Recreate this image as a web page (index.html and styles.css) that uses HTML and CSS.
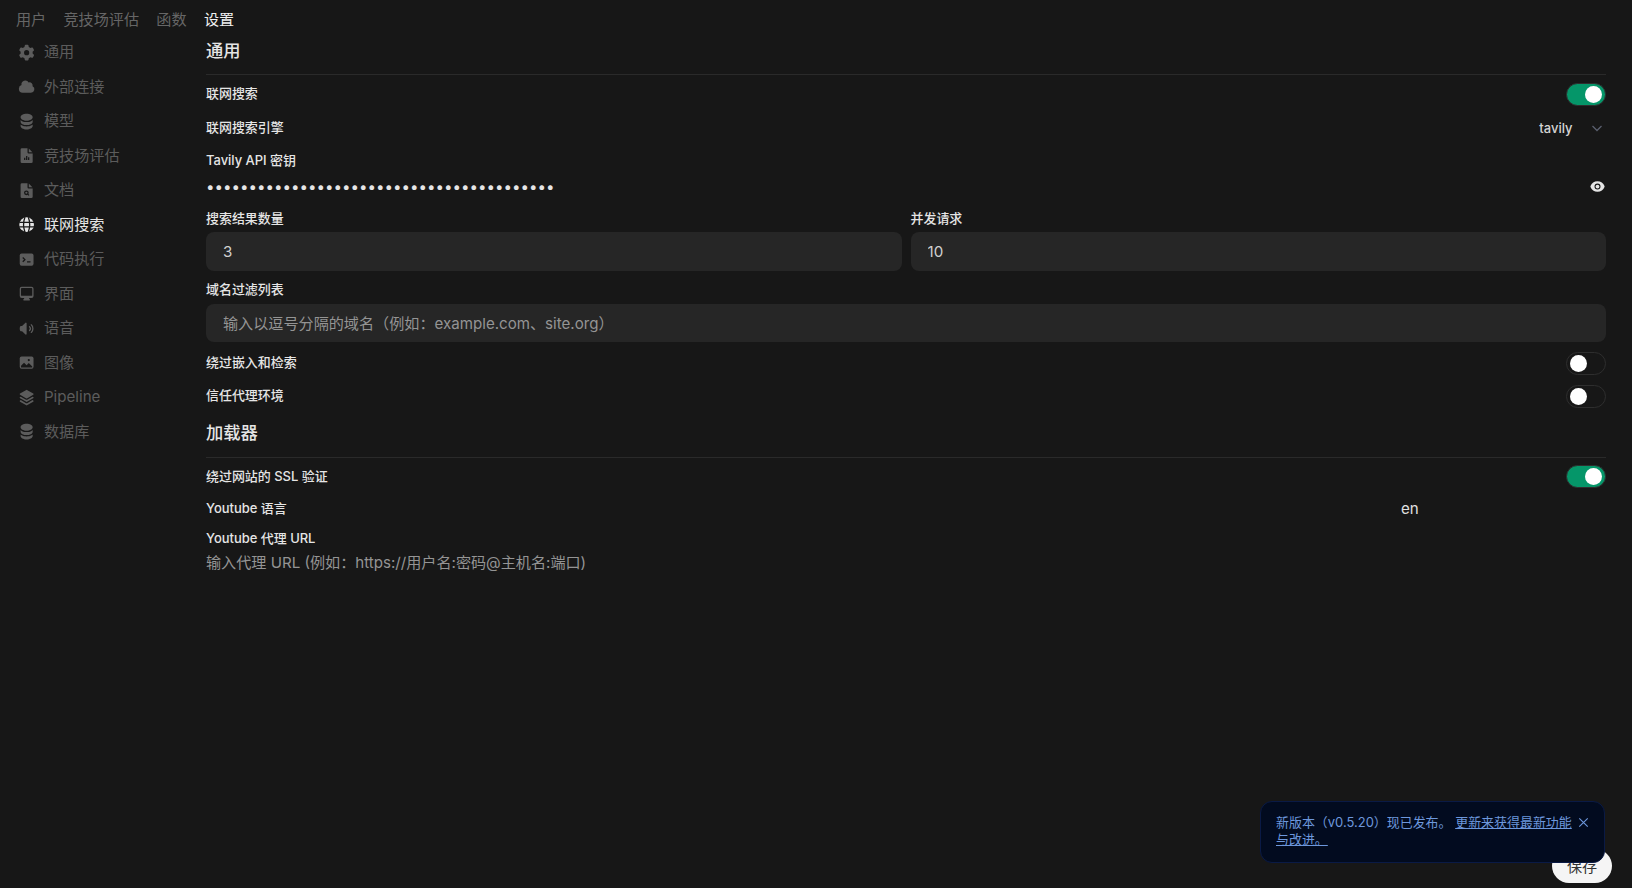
FILE: index.html
```html
<!DOCTYPE html>
<html lang="zh-CN">

<head>
    <meta charset="UTF-8">
    <title>设置</title>
    <link rel="stylesheet" href="styles.css">
</head>

<body>
    <!-- top tabs -->
    <nav class="tabs">
        <a>用户</a>
        <a>竞技场评估</a>
        <a>函数</a>
        <a class="active">设置</a>
    </nav>

    <div class="layout">
        <!-- settings menu -->
        <aside class="menu">
            <a class="menu-item">
                <svg viewBox="0 0 20 20"><path fill-rule="evenodd" d="M7.84 1.804A1 1 0 0 1 8.82 1h2.36a1 1 0 0 1 .98.804l.331 1.652a6.993 6.993 0 0 1 1.929 1.115l1.598-.54a1 1 0 0 1 1.186.447l1.18 2.044a1 1 0 0 1-.205 1.251l-1.267 1.113a7.047 7.047 0 0 1 0 2.228l1.267 1.113a1 1 0 0 1 .206 1.25l-1.18 2.045a1 1 0 0 1-1.187.447l-1.598-.54a6.993 6.993 0 0 1-1.929 1.115l-.33 1.652a1 1 0 0 1-.98.804H8.82a1 1 0 0 1-.98-.804l-.331-1.652a6.993 6.993 0 0 1-1.929-1.115l-1.598.54a1 1 0 0 1-1.186-.447l-1.18-2.044a1 1 0 0 1 .205-1.251l1.267-1.114a7.05 7.05 0 0 1 0-2.227L1.821 7.773a1 1 0 0 1-.206-1.25l1.18-2.045a1 1 0 0 1 1.187-.447l1.598.54A6.992 6.992 0 0 1 7.51 3.456l.33-1.652ZM10 13a3 3 0 1 0 0-6 3 3 0 0 0 0 6Z"/></svg>
                通用
            </a>
            <a class="menu-item">
                <svg viewBox="0 0 20 20"><path d="M1 12.5A4.5 4.5 0 0 0 5.5 17H15a4 4 0 0 0 1.866-7.539 3.504 3.504 0 0 0-4.504-4.272A4.5 4.5 0 0 0 4.06 8.235 4.502 4.502 0 0 0 1 12.5Z"/></svg>
                外部连接
            </a>
            <a class="menu-item">
                <svg viewBox="0 0 20 20"><path d="M10 1c3.866 0 7 1.79 7 4s-3.134 4-7 4-7-1.79-7-4 3.134-4 7-4zm5.694 8.13c.464-.264.91-.583 1.306-.952V10c0 2.21-3.134 4-7 4s-7-1.79-7-4V8.178c.396.37.842.688 1.306.953C5.838 10.006 7.854 10.5 10 10.5s4.162-.494 5.694-1.37zM3 13.179V15c0 2.21 3.134 4 7 4s7-1.79 7-4v-1.822c-.396.37-.842.688-1.306.953-1.532.875-3.548 1.369-5.694 1.369s-4.162-.494-5.694-1.37A7.009 7.009 0 013 13.179z"/></svg>
                模型
            </a>
            <a class="menu-item">
                <svg viewBox="0 0 20 20"><path d="M4.5 1.500A1.500 1.500 0 0 0 3 3v14a1.500 1.500 0 0 0 1.500 1.500h11A1.500 1.500 0 0 0 17 17V7.500h-4.500A1.500 1.500 0 0 1 11 6V1.500H4.500Z"/><path d="M12.500 1.800v3.900c0 .2.100.3.300.3h3.900Z"/><path class="cut" d="M7 12.500h1.500V15H7ZM9.300 10.500h1.500V15H9.300ZM11.600 12h1.500v3h-1.500Z"/></svg>
                竞技场评估
            </a>
            <a class="menu-item">
                <svg viewBox="0 0 20 20"><path d="M4.5 1.500A1.500 1.500 0 0 0 3 3v14a1.500 1.500 0 0 0 1.500 1.500h11A1.500 1.500 0 0 0 17 17V7.500h-4.500A1.500 1.500 0 0 1 11 6V1.500H4.500Z"/><path d="M12.500 1.800v3.900c0 .2.100.3.300.3h3.900Z"/><circle class="ring" cx="9.700" cy="12.500" r="2"/><path class="ring" d="m11.200 14 1.500 1.500"/></svg>
                文档
            </a>
            <a class="menu-item active">
                <svg viewBox="0 0 20 20"><circle cx="10" cy="10" r="8.500"/><path class="ring" d="M1.500 7.500h17M1.500 12.500h17M8 1.500C6 7 6 13 8 18.500M12 1.500c2 5.500 2 11.500 0 17"/></svg>
                联网搜索
            </a>
            <a class="menu-item">
                <svg viewBox="0 0 20 20"><rect x="2" y="3" width="16" height="14" rx="2.200"/><path class="ring" d="m5.500 7.500 2.500 2.500-2.500 2.500M10.500 12.500h4"/></svg>
                代码执行
            </a>
            <a class="menu-item">
                <svg viewBox="0 0 20 20"><path fill-rule="evenodd" d="M2 4.250A2.250 2.250 0 0 1 4.250 2h11.500A2.250 2.250 0 0 1 18 4.250v8.500A2.250 2.250 0 0 1 15.750 15h-3.105a3.501 3.501 0 0 0 1.100 1.677A.75.75 0 0 1 13.260 18H6.740a.75.75 0 0 1-.484-1.323A3.501 3.501 0 0 0 7.355 15H4.250A2.250 2.250 0 0 1 2 12.750v-8.500Zm1.500 0a.75.75 0 0 1 .75-.75h11.500a.75.75 0 0 1 .75.750v7.500a.75.75 0 0 1-.75.750H4.250a.75.75 0 0 1-.75-.75v-7.500Z"/></svg>
                界面
            </a>
            <a class="menu-item">
                <svg viewBox="0 0 20 20"><path d="M10 3.750a.75.75 0 0 0-1.264-.546L4.703 7H3.167a.75.75 0 0 0-.7.48A6.985 6.985 0 0 0 2 10c0 .887.165 1.737.468 2.520.111.29.39.48.7.48h1.535l4.033 3.796A.75.75 0 0 0 10 16.250V3.750ZM15.950 5.050a.75.75 0 0 0-1.060 1.061 5.500 5.500 0 0 1 0 7.778.75.75 0 0 0 1.060 1.060 7 7 0 0 0 0-9.899Z"/><path d="M13.829 7.172a.75.75 0 0 0-1.061 1.060 2.500 2.500 0 0 1 0 3.536.75.75 0 0 0 1.060 1.060 4 4 0 0 0 0-5.656Z"/></svg>
                语音
            </a>
            <a class="menu-item">
                <svg viewBox="0 0 20 20"><rect x="2" y="3" width="16" height="14" rx="2.200"/><path class="cut" d="M3.500 15.500v-2l3.500-3.500 3 3 2.500-2.500 4 4v1Z"/><circle class="cut" cx="12.500" cy="7" r="1.300"/></svg>
                图像
            </a>
            <a class="menu-item">
                <svg viewBox="0 0 20 20"><path d="m3.196 12.870-.825.483a.75.75 0 0 0 0 1.294l7.250 4.250a.75.75 0 0 0 .758 0l7.250-4.250a.75.75 0 0 0 0-1.294l-.825-.484-5.666 3.322a2.250 2.250 0 0 1-2.276 0L3.196 12.870Z"/><path d="m3.196 8.870-.825.483a.75.75 0 0 0 0 1.294l7.250 4.250a.75.75 0 0 0 .758 0l7.250-4.250a.75.75 0 0 0 0-1.294l-.825-.484-5.666 3.322a2.250 2.250 0 0 1-2.276 0L3.196 8.870Z"/><path d="M10.380 1.103a.75.75 0 0 0-.76 0l-7.250 4.250a.75.75 0 0 0 0 1.294l7.250 4.250a.75.75 0 0 0 .76 0l7.250-4.250a.75.75 0 0 0 0-1.294l-7.250-4.250Z"/></svg>
                Pipeline
            </a>
            <a class="menu-item">
                <svg viewBox="0 0 20 20"><path d="M10 1c3.866 0 7 1.790 7 4s-3.134 4-7 4-7-1.790-7-4 3.134-4 7-4zm5.694 8.130c.464-.264.91-.583 1.306-.952V10c0 2.210-3.134 4-7 4s-7-1.790-7-4V8.178c.396.37.842.688 1.306.953C5.838 10.006 7.854 10.500 10 10.500s4.162-.494 5.694-1.370zM3 13.179V15c0 2.210 3.134 4 7 4s7-1.790 7-4v-1.822c-.396.37-.842.688-1.306.953-1.532.875-3.548 1.369-5.694 1.369s-4.162-.494-5.694-1.370A7.009 7.009 0 013 13.179z"/></svg>
                数据库
            </a>
        </aside>

        <main class="panel">
            <div class="fields">
                <h3 class="heading">通用</h3>
                <hr class="rule">

                <div class="row row-first">
                    <span class="label">联网搜索</span>
                    <span class="switch on"></span>
                </div>
                <div class="row row-select">
                    <span class="label">联网搜索引擎</span>
                    <span class="select">tavily
                        <svg viewBox="0 0 16 16"><path d="m3.500 6 4.500 4.500L12.500 6"/></svg>
                    </span>
                </div>

                <div class="label field-label key-label">Tavily API 密钥</div>
                <div class="secret">
                    <input class="secret-input" type="password" value="abcdefghijklmnopqrstuvwxyz012345678901234">
                    <svg viewBox="0 0 20 20"><path d="M10 12.500a2.500 2.500 0 1 0 0-5 2.500 2.500 0 0 0 0 5Z"/><path fill-rule="evenodd" d="M.664 10.590a1.651 1.651 0 0 1 0-1.186A10.004 10.004 0 0 1 10 3c4.257 0 7.893 2.660 9.336 6.410.147.381.146.804 0 1.186A10.004 10.004 0 0 1 10 17c-4.257 0-7.893-2.660-9.336-6.410ZM14 10a4 4 0 1 1-8 0 4 4 0 0 1 8 0Z"/></svg>
                </div>

                <div class="pair">
                    <div>
                        <div class="label field-label">搜索结果数量</div>
                        <input class="box" value="3">
                    </div>
                    <div>
                        <div class="label field-label">并发请求</div>
                        <input class="box" value="10">
                    </div>
                </div>

                <div class="label field-label domain-label">域名过滤列表</div>
                <input class="box box-domain" placeholder="输入以逗号分隔的域名（例如：example.com、site.org）">

                <div class="row row-bypass">
                    <span class="label">绕过嵌入和检索</span>
                    <span class="switch"></span>
                </div>
                <div class="row row-trust">
                    <span class="label">信任代理环境</span>
                    <span class="switch"></span>
                </div>

                <h3 class="heading heading-loader">加载器</h3>
                <hr class="rule rule-loader">

                <div class="row row-ssl">
                    <span class="label label-flat">绕过网站的 SSL 验证</span>
                    <span class="switch on"></span>
                </div>
                <div class="row row-lang">
                    <span class="label label-flat">Youtube 语言</span>
                    <input class="plain lang" value="en">
                </div>

                <div class="label proxy-label">Youtube 代理 URL</div>
                <input class="plain proxy" placeholder="输入代理 URL (例如：https://用户名:密码@主机名:端口)">
            </div>

            <div class="actions">
                <button class="save">保存</button>
            </div>
        </main>
    </div>

    <!-- update notice, floats over the save button -->
    <div class="toast">
        <p>新版本（v0.5.20）现已发布。 <a>更新来获得最新功能与改进。</a></p>
        <svg viewBox="0 0 16 16"><path d="m3.500 3.500 9 9M12.500 3.500l-9 9"/></svg>
    </div>
</body>

</html>
```

FILE: styles.css
```css
/* base */
* {
    box-sizing: border-box;
}

html {
    height: 888px;
    overflow: hidden;
}

body {
    margin: 0;
    height: 888px;
    overflow: hidden;
    display: flex;
    flex-direction: column;
    background-color: #171717;
    color: #e5e5e5;
    font-family: Inter, "Noto Sans CJK SC", sans-serif;
    font-size: 15.12px;
}

/* top tabs */
.tabs {
    display: flex;
    gap: 17.3px;
    height: 36px;
    padding: 9px 0 0 16px;
    line-height: 22px;
    color: #666;
}

.tabs .active {
    color: #f0f0f0;
}

.layout {
    flex: 1;
    display: flex;
    min-height: 0;
}

/* settings menu */
.menu {
    width: 206px;
    flex-shrink: 0;
    margin-top: -1px;
    padding-left: 18px;
}

.menu-item {
    display: flex;
    align-items: center;
    gap: 8.7px;
    height: 34.5px;
    color: #5c5c5c;
    line-height: 30px;
}

.menu-item svg {
    width: 17.28px;
    height: 17.28px;
    flex-shrink: 0;
    fill: #5c5c5c;
}

.menu-item.active {
    color: #e5e5e5;
}

.menu-item.active svg {
    fill: #e5e5e5;
}

.menu-item .cut {
    fill: #171717;
}

.menu-item .ring {
    fill: none;
    stroke: #171717;
    stroke-width: 1.5;
}

/* main panel */
.panel {
    flex: 1;
    display: flex;
    flex-direction: column;
    padding-right: 26px;
    min-width: 0;
}

.fields {
    flex: 1;
}

.heading {
    margin: 0;
    height: 30px;
    font-size: 17.28px;
    font-weight: 500;
    line-height: 30px;
}

.heading-loader {
    margin-top: 11px;
}

.rule {
    margin: 8px 0 0;
    border: 0;
    border-top: 1px solid #2a2a2a;
}

.rule-loader {
    margin-top: 9px;
}

.label {
    padding-bottom: 2px;
    font-size: 12.96px;
    font-weight: 500;
    line-height: 18px;
}

.label-flat {
    padding-bottom: 0;
    line-height: 20px;
}

.row {
    display: flex;
    align-items: center;
    justify-content: space-between;
}

.row-first {
    height: 22px;
    margin-top: 8px;
}

.row-select {
    height: 20px;
    margin-top: 13px;
}

.row-bypass {
    height: 22px;
    margin-top: 10px;
}

.row-trust {
    height: 22px;
    margin-top: 11px;
}

.row-ssl {
    height: 22px;
    margin-top: 7px;
}

.row-lang {
    height: 22px;
    margin-top: 10px;
}

.switch {
    position: relative;
    width: 40px;
    height: 23px;
    border: 1px solid #2e2e2e;
    border-radius: 12px;
}

.switch::after {
    content: "";
    position: absolute;
    top: 2px;
    left: 3px;
    width: 17px;
    height: 17px;
    border-radius: 50%;
    background-color: #fff;
}

.switch.on {
    background-color: #059669;
}

.switch.on::after {
    left: 18px;
}

.select {
    display: flex;
    align-items: center;
    gap: 16px;
    padding-right: 1.5px;
    font-size: 12.96px;
    font-weight: 500;
    color: #d4d4d4;
}

.select svg {
    width: 16px;
    height: 16px;
    fill: none;
    stroke: #5a5f6e;
    stroke-width: 1.3;
}

.field-label {
    height: 20px;
}

.key-label {
    margin-top: 13px;
}

.secret {
    display: flex;
    align-items: center;
    justify-content: space-between;
    height: 22px;
    margin-top: 4px;
}

.secret-input {
    flex: 1;
    height: 22px;
    padding: 0;
    border: 0;
    outline: 0;
    background: transparent;
    color: #e5e5e5;
    font-family: Inter, sans-serif;
    font-size: 15.12px;
}

.secret svg {
    width: 15px;
    height: 15px;
    margin-right: 1px;
    fill: #e5e5e5;
}

.pair {
    display: grid;
    grid-template-columns: 1fr 1fr;
    gap: 9px;
    margin-top: 12px;
}

.box {
    display: block;
    width: 100%;
    height: 39px;
    margin-top: 3px;
    padding: 0 17px;
    border: 0;
    border-radius: 8px;
    outline: 0;
    background-color: #262626;
    color: #d0d0d0;
    font: inherit;
}

.box-domain {
    height: 38px;
    margin-top: 4px;
}

.box::placeholder,
.plain::placeholder {
    color: #949494;
    opacity: 1;
}

.domain-label {
    margin-top: 9px;
}

.plain {
    display: block;
    padding: 0;
    border: 0;
    outline: 0;
    background: transparent;
    color: #e0e0e0;
    font: inherit;
}

.lang {
    width: 205px;
}

.proxy-label {
    margin-top: 10px;
}

.proxy {
    width: 100%;
    height: 24px;
    margin-top: 1px;
}

/* save button */
.actions {
    display: flex;
    justify-content: flex-end;
    margin-right: -6px;
    padding-bottom: 5px;
}

.save {
    width: 60px;
    height: 34px;
    padding: 0 0 2px;
    border: 0;
    border-radius: 17px;
    background-color: #f5f5f5;
    color: #333;
    font: inherit;
    font-size: 15.12px;
}

/* update notice */
.toast {
    position: absolute;
    left: 1260px;
    top: 801px;
    display: flex;
    justify-content: space-between;
    width: 345px;
    height: 62px;
    padding: 12px 13px 12px 15px;
    border: 1px solid #0a1a45;
    border-radius: 12px;
    background-color: #020b1f;
    color: #6d97dc;
    font-size: 12.96px;
    line-height: 17px;
}

.toast p {
    margin: 0;
    width: 298px;
}

.toast a {
    text-decoration: underline;
}

.toast svg {
    flex-shrink: 0;
    width: 15px;
    height: 15px;
    margin-top: 1px;
    fill: none;
    stroke: #6d97dc;
    stroke-width: 1.2;
}
```
